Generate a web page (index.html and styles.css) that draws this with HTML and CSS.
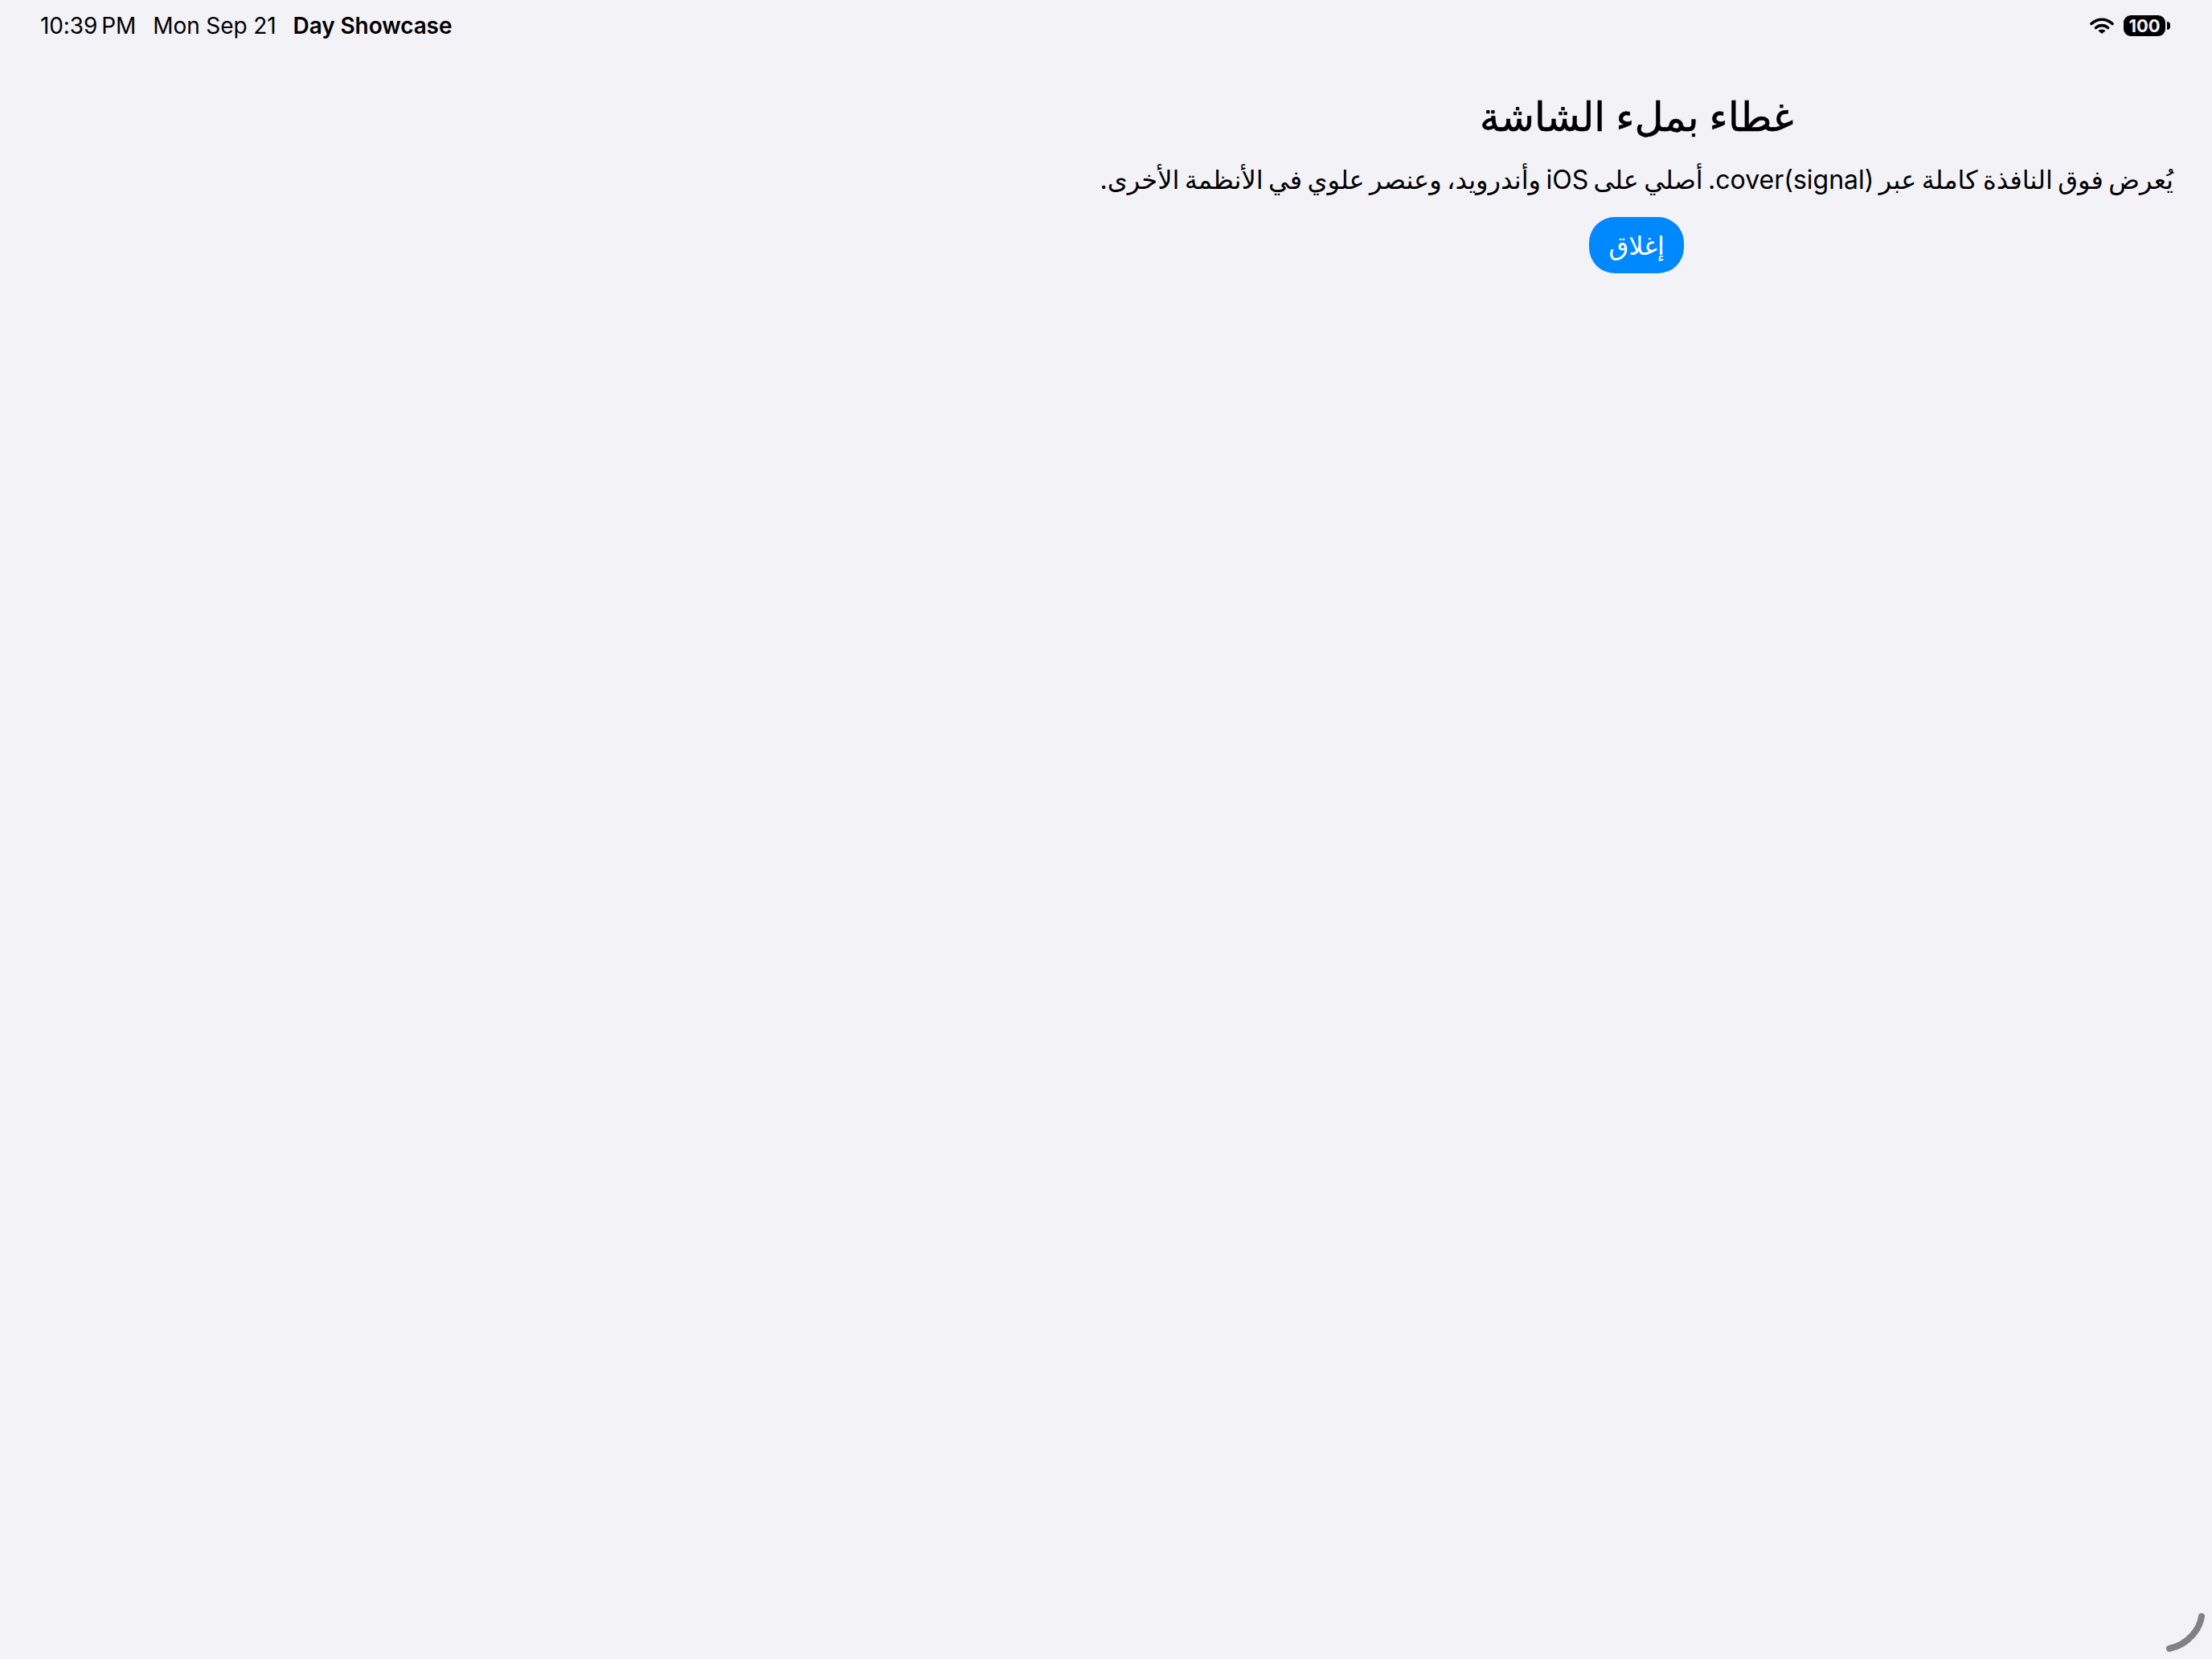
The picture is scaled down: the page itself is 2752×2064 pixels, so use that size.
FILE: index.html
```html
<!DOCTYPE html>
<html lang="ar" dir="rtl">
<head>
    <meta charset="UTF-8">
    <title>Day Showcase</title>
    <link rel="stylesheet" href="styles.css">
</head>
<body>
    <div class="status-bar" dir="ltr">
        <div class="status-left">
            <span class="time">10:39&#8201;PM</span>
            <span>Mon Sep 21</span>
            <span class="app-name">Day Showcase</span>
        </div>
        <div class="status-right">
            <svg class="wifi" viewBox="0 0 30 22" width="30" height="22">
                <path d="M2 8.5C9.5 1.5 20.5 1.5 28 8.5" fill="none" stroke="#000" stroke-width="3.6" stroke-linecap="round"/>
                <path d="M7.5 13.5C12 9.6 18 9.6 22.5 13.5" fill="none" stroke="#000" stroke-width="3.6" stroke-linecap="round"/>
                <path d="M15 21L10.5 17.2C13 15.4 17 15.4 19.5 17.2Z" fill="#000"/>
            </svg>
            <div class="battery">100</div>
            <div class="battery-cap"></div>
        </div>
    </div>

    <main class="cover">
        <h1 class="title">غطاء بملء الشاشة</h1>
        <p class="desc">يُعرض فوق النافذة كاملة عبر cover(signal). أصلي على iOS وأندرويد، وعنصر علوي في الأنظمة الأخرى.</p>
        <button class="close">إغلاق</button>
    </main>

    <svg class="grabber" viewBox="0 0 56 52" width="56" height="52">
        <path d="M47 7C45 22 31 42 7 47" fill="none" stroke="#828286" stroke-width="8" stroke-linecap="round"/>
    </svg>
</body>
</html>
```

FILE: styles.css
```css
html, body {
    height: 100%;
}

body {
    margin: 0;
    background: #f2f2f7;
    color: #000;
    font-family: Inter, "DejaVu Sans", sans-serif;
    overflow: hidden;
    position: relative;
}

.status-bar {
    display: flex;
    justify-content: space-between;
    align-items: center;
    height: 64px;
    padding: 0 52px 0 50px;
    font-size: 28px;
    letter-spacing: -0.1px;
}

.status-left {
    display: flex;
    gap: 21px;
}

.app-name {
    font-weight: 600;
}

.status-right {
    display: flex;
    align-items: center;
}

.wifi {
    margin-right: 12px;
}

.battery {
    background: #000;
    color: #f2f2f7;
    font-size: 22px;
    font-weight: 700;
    line-height: 26px;
    width: 52px;
    text-align: center;
    border-radius: 9px;
}

.battery-cap {
    width: 4px;
    height: 10px;
    margin-left: 2px;
    background: #000;
    border-radius: 0 4px 4px 0;
}

.cover {
    display: flex;
    flex-direction: column;
    align-items: center;
    width: fit-content;
    padding: 52px 48px 0 0;
}

.title {
    margin: 0;
    font-size: 49.5px;
    font-weight: 500;
    line-height: 58px;
    -webkit-text-stroke: 0.6px #000;
}

.desc {
    margin: 30px 0 0;
    font-size: 32px;
    line-height: 40px;
    word-spacing: -2.6px;
}

.close {
    margin-top: 26px;
    height: 70px;
    padding: 0 24px;
    border: none;
    border-radius: 32px;
    background: #0088ff;
    color: #fff;
    font-family: inherit;
    font-size: 32px;
}

.grabber {
    position: absolute;
    right: 4px;
    bottom: 8px;
}
```
